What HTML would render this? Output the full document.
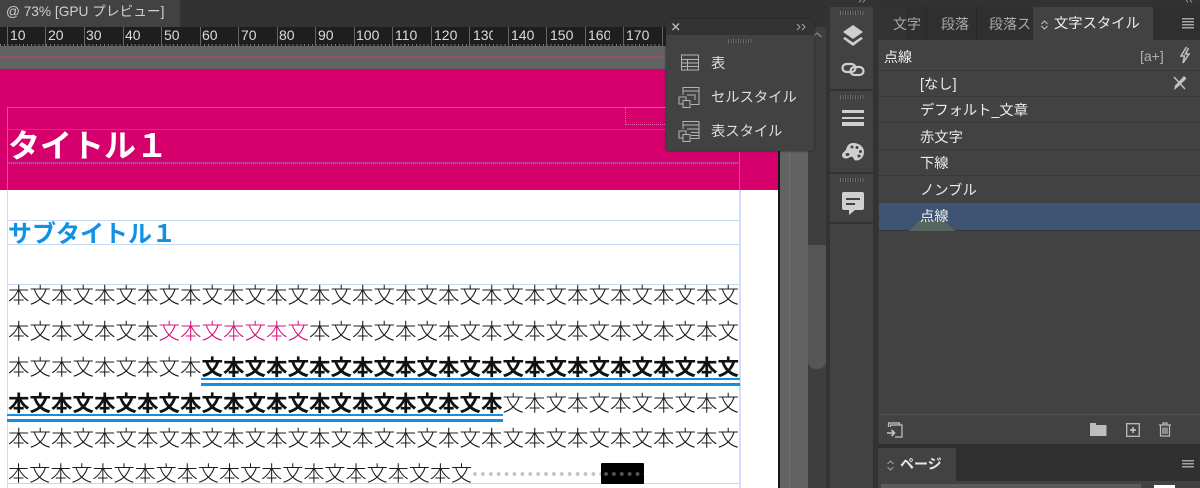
<!DOCTYPE html>
<html lang="ja"><head><meta charset="utf-8">
<style>
html,body{margin:0;padding:0}
body{width:1200px;height:488px;overflow:hidden;position:relative;background:#3a3a3a;font-family:"Liberation Sans","Noto Sans CJK JP",sans-serif}
div,svg,span.a{position:absolute}
.t{white-space:nowrap;line-height:1}
.b{font-size:21.5px;color:#1c1c1c;left:8px;font-family:"Noto Sans CJK JP",sans-serif;font-weight:300}
.b b{font-weight:700;color:#111}
.b i{font-style:normal;color:#d8127f}
.g{background:#c4d9f8;height:1px;left:7px;width:733px}
.gp{background:#b8399e;height:1px;left:7px;width:733px}
.rul{color:#dcdcdc;font-size:14px;top:28px}
.tick{background:#666;width:1px;top:27px;height:19px}
.rt{left:920px;color:#ececec;font-size:14.3px}
.tab{color:#a9a9a9;font-size:14px;top:17px}
.grip{background:repeating-linear-gradient(90deg,#777 0 1px,#333 1px 2.5px);height:4px}
</style></head><body>
<!-- top bar -->
<div style="left:0;top:0;width:1200px;height:27px;background:#323232"></div>
<div style="left:0;top:0;width:180px;height:27px;background:#424242"></div>
<div class="t" style="left:6px;top:5px;font-size:13.7px;color:#cfcfcf">@ 73% [GPU プレビュー]</div>
<!-- ruler -->
<div style="left:0;top:27px;width:666px;height:19px;background:#1e1e1e"></div>
<div style="left:0;top:44px;width:666px;height:2px;background:repeating-linear-gradient(90deg,#777 0 1px,transparent 1px 3.85px)"></div>
<div class="tick" style="left:7px"></div><div class="tick" style="left:45px"></div><div class="tick" style="left:84px"></div><div class="tick" style="left:123px"></div><div class="tick" style="left:161px"></div><div class="tick" style="left:200px"></div><div class="tick" style="left:238px"></div><div class="tick" style="left:277px"></div><div class="tick" style="left:315px"></div><div class="tick" style="left:354px"></div><div class="tick" style="left:392px"></div><div class="tick" style="left:431px"></div><div class="tick" style="left:469px"></div><div class="tick" style="left:508px"></div><div class="tick" style="left:546px"></div><div class="tick" style="left:585px"></div><div class="tick" style="left:623px"></div><div class="tick" style="left:662px"></div>
<div class="t rul" style="left:10px">10</div><div class="t rul" style="left:48px">20</div><div class="t rul" style="left:86px">30</div><div class="t rul" style="left:125px">40</div><div class="t rul" style="left:164px">50</div><div class="t rul" style="left:202px">60</div><div class="t rul" style="left:241px">70</div><div class="t rul" style="left:279px">80</div><div class="t rul" style="left:318px">90</div><div class="t rul" style="left:356px">100</div><div class="t rul" style="left:395px">110</div><div class="t rul" style="left:434px">120</div><div class="t rul" style="left:473px;width:20px;overflow:hidden">130</div><div class="t rul" style="left:511px">140</div><div class="t rul" style="left:550px">150</div><div class="t rul" style="left:588px;width:22px;overflow:hidden">160</div><div class="t rul" style="left:626px">170</div>
<!-- pasteboard -->
<div style="left:0;top:46px;width:808px;height:442px;background:#636363"></div>
<div style="left:0;top:56px;width:666px;height:2px;background:#98545c"></div>
<div style="left:789px;top:151px;width:1px;height:337px;background:#a65560"></div>
<!-- page -->
<div style="left:0;top:190px;width:778px;height:298px;background:#fff"></div>
<div style="left:0;top:69px;width:778px;height:121px;background:#d6006c"></div>
<div style="left:778px;top:69px;width:2px;height:419px;background:#161616"></div>
<!-- scroll column -->
<div style="left:808px;top:27px;width:18px;height:461px;background:#3e3e3e"></div>
<div style="left:808px;top:245px;width:18px;height:124px;background:#565656;border-radius:0 0 8px 8px"></div>
<svg style="left:811px;top:31px" width="12" height="8"><path d="M1.5 6L6 2l4.500 4" fill="none" stroke="#8a8a8a" stroke-width="1.200"/></svg>
<!-- guides pink -->
<div style="left:7px;top:107px;width:733px;height:1px;background:#dc4a98"></div>
<div class="gp" style="top:128.500px"></div>
<div class="gp" style="top:161.500px"></div>
<div style="left:7px;top:163px;width:733px;height:0;border-top:1px dotted #e45ca6"></div>
<div style="left:625px;top:107px;width:41px;height:16px;border:1px dotted #e56aa9;border-right:0"></div>
<div style="left:7px;top:107px;width:1px;height:83px;background:#c25bad"></div>
<div style="left:739px;top:152px;width:1px;height:38px;background:#b654b0"></div>
<!-- guides white -->
<div style="left:6.500px;top:190px;width:1.500px;height:298px;background:#d3dcfb"></div>
<div style="left:739px;top:190px;width:1.500px;height:298px;background:#d3dcfb"></div>
<div class="g" style="top:220px"></div>
<div class="g" style="top:244px"></div>
<div class="g" style="top:283.500px;height:1.500px"></div>
<div class="g" style="top:483px"></div>
<!-- titles -->
<div class="t" style="left:8px;top:128px;font-size:32px;font-weight:700;color:#fff;font-family:'Noto Sans CJK JP',sans-serif">タイトル１</div>
<div class="t" style="left:8px;top:220px;font-size:24px;font-weight:700;color:#1190e4;font-family:'Noto Sans CJK JP',sans-serif">サブタイトル１</div>
<!-- body -->
<div class="t b" style="top:284px">本文本文本文本文本文本文本文本文本文本文本文本文本文本文本文本文本文</div>
<div class="t b" style="top:320px">本文本文本文本<i>文本文本文本文</i>本文本文本文本文本文本文本文本文本文本文</div>
<div class="t b" style="top:356px">本文本文本文本文本<b>文本文本文本文本文本文本文本文本文本文本文本文本文</b></div>
<div class="t b" style="top:391.500px"><b>本文本文本文本文本文本文本文本文本文本文本文本</b>文本文本文本文本文本文</div>
<div class="t b" style="top:427px">本文本文本文本文本文本文本文本文本文本文本文本文本文本文本文本文本文</div>
<div class="t b" style="top:463px;font-size:21.100px">本文本文本文本文本文本文本文本文本文本文本文</div>
<!-- underlines -->
<div style="left:201px;top:378px;width:539px;height:2px;background:#1190e4"></div>
<div style="left:201px;top:382.500px;width:539px;height:3px;background:#1190e4"></div>
<div style="left:7px;top:414px;width:496px;height:2px;background:#1190e4"></div>
<div style="left:7px;top:418.500px;width:496px;height:3px;background:#1190e4"></div>
<!-- dotted -->
<div style="left:473px;top:472px;width:128px;height:4px;background:radial-gradient(circle 2px at 2px 2px,#c4c4c4 90%,transparent 100%) 0 0/7.900px 4px repeat-x"></div>
<div style="left:601px;top:463px;width:43px;height:21px;background:#000;border-radius:1px"></div>
<div style="left:604px;top:472px;width:40px;height:4px;background:radial-gradient(circle 2px at 2px 2px,#555 90%,transparent 100%) 0 0/7.900px 4px repeat-x"></div>
<!-- floating panel -->
<div style="left:666px;top:19px;width:148px;height:132px;background:#424242;border-radius:3px;box-shadow:0 0 2px #222"></div>
<div style="left:666px;top:19px;width:148px;height:16px;background:#333;border-radius:3px 3px 0 0"></div>
<svg style="left:671px;top:22px" width="10" height="10"><path d="M1.500 1.500l6.500 6.500M8 1.500L1.500 8" stroke="#bdbdbd" stroke-width="1.300"/></svg>
<svg style="left:796px;top:23px" width="11" height="9"><path d="M1 1l3 3-3 3M6 1l3 3-3 3" stroke="#a5a5a5" fill="none"/></svg>
<div class="grip" style="left:728px;top:39px;width:24px"></div>
<svg style="left:680px;top:54px" width="20" height="18" fill="none" stroke="#b5b5b5"><rect x="1.500" y="1" width="17" height="15"/><path d="M1.500 5.500h17M1.500 9h17M1.500 12.500h17M7.500 5.500V16"/></svg>
<svg style="left:678px;top:86px" width="22" height="23" fill="none" stroke="#b5b5b5"><path d="M5 9V1.500h16v17h-8M5 5h16M9 9h8v5"/><rect x="1" y="11" width="7" height="7"/><rect x="5" y="14.500" width="7" height="7" fill="#424242"/></svg>
<svg style="left:678px;top:120px" width="22" height="23" fill="none" stroke="#b5b5b5"><path d="M5 9V1.500h16v17h-8M5 5h16M9 9h12M13 12.500h8M13 15.500h8"/><rect x="1" y="11" width="7" height="7"/><rect x="5" y="14.500" width="7" height="7" fill="#424242"/></svg>
<div class="t" style="left:711px;top:57px;font-size:14.3px;color:#dedede">表</div>
<div class="t" style="left:711px;top:91px;font-size:14.3px;color:#dedede">セルスタイル</div>
<div class="t" style="left:711px;top:125px;font-size:14.3px;color:#dedede">表スタイル</div>
<!-- dock -->
<div style="left:826px;top:0;width:52px;height:488px;background:#333"></div>
<svg style="left:858px;top:0" width="10" height="4"><path d="M3 0L1 2.500M7 0L5 2.500" stroke="#999" fill="none"/></svg>
<svg style="left:1185px;top:0" width="10" height="4"><path d="M1 0l2 2.500M5 0l2 2.500" stroke="#999" fill="none"/></svg>
<div style="left:830px;top:7px;width:43px;height:82px;background:#424242"></div>
<div style="left:830px;top:91px;width:43px;height:81px;background:#424242"></div>
<div style="left:830px;top:174px;width:43px;height:48px;background:#424242"></div>
<div style="left:830px;top:224px;width:43px;height:264px;background:#424242"></div>
<div class="grip" style="left:840px;top:11px;width:24px"></div>
<div class="grip" style="left:840px;top:95px;width:24px"></div>
<div class="grip" style="left:840px;top:178px;width:24px"></div>
<svg style="left:842px;top:24px" width="22" height="24" fill="#cfcfcf"><path d="M11 1L21 8 11 15 1 8z"/><path d="M3 13l8 5.500L19 13l2 1.500L11 22 1 14.500z"/></svg>
<svg style="left:841px;top:61px" width="24" height="17" fill="none" stroke="#cfcfcf" stroke-width="2.200"><rect x="1.500" y="3" width="13" height="8" rx="4"/><rect x="9.500" y="6" width="13" height="8" rx="4"/></svg>
<div style="left:842px;top:110px;width:22px;height:3px;background:#d0d0d0"></div>
<div style="left:842px;top:117px;width:22px;height:2px;background:#d0d0d0"></div>
<div style="left:842px;top:122px;width:22px;height:4px;background:#d0d0d0"></div>
<svg style="left:841px;top:142px" width="24" height="20"><path d="M12 1c6 0 11 3.500 11 9s-4 8.500-8 8.500c-2.500 0-2-2.500-3.500-3.500-2-1-3.500 1.500-6.500 1.500C2 16.500 1 14.500 1 13c0-2.500 3-3 4-5.500C6 4 8 1 12 1z" fill="#cfcfcf"/><circle cx="11" cy="5" r="1.500" fill="#424242"/><circle cx="16" cy="5.500" r="1.500" fill="#424242"/><circle cx="19.500" cy="9.500" r="1.500" fill="#424242"/><circle cx="18" cy="14" r="1.500" fill="#424242"/><ellipse cx="6.500" cy="12.500" rx="2" ry="1.500" fill="#424242"/></svg>
<svg style="left:841px;top:191px" width="24" height="25"><path d="M3 1h18a2 2 0 0 1 2 2v14a2 2 0 0 1-2 2h-7l-6 5v-5H3a2 2 0 0 1-2-2V3a2 2 0 0 1 2-2z" fill="#d0d0d0"/><path d="M5 7h14v2H5zM5 12h9v2H5z" fill="#424242"/></svg>
<!-- right panel tabs -->
<div style="left:878px;top:7px;width:322px;height:33px;background:#2f2f2f"></div>
<div style="left:878px;top:7px;width:28px;height:33px;background:#333"></div>
<div style="left:926px;top:7px;width:1px;height:33px;background:#272727"></div>
<div style="left:976px;top:7px;width:1px;height:33px;background:#272727"></div>
<div class="t tab" style="left:893px">文字</div>
<div class="t tab" style="left:941px">段落</div>
<div class="t tab" style="left:989px;width:43px;overflow:hidden">段落スタイル</div>
<div style="left:1033px;top:7px;width:120px;height:33px;background:#424242"></div>
<svg style="left:1040px;top:20px" width="9" height="10" fill="none" stroke="#c0c0c0"><path d="M1.500 4l3-3 3 3M1.500 6l3 3 3-3"/></svg>
<div class="t" style="left:1054px;top:17px;font-size:14.3px;color:#eee">文字スタイル</div>
<div style="left:1182px;top:18px;width:12px;height:11px;background:repeating-linear-gradient(180deg,#a5a5a5 0 1.500px,transparent 1.500px 3px)"></div>
<!-- panel -->
<div style="left:878px;top:40px;width:322px;height:448px;background:#424242"></div>
<div style="left:878px;top:40px;width:1px;height:405px;background:#3a3a3a"></div>
<div class="t" style="left:884px;top:50px;font-size:14px;color:#eee">点線</div>
<div class="t" style="left:1140px;top:49px;font-size:14px;color:#b0b0b0">[a+]</div>
<svg style="left:1179px;top:46px" width="12" height="18"><path d="M7.500 1L2 10h3.500L4 17l6-9H6.500L9.500 2" fill="none" stroke="#c0c0c0" stroke-width="1.500"/></svg>
<div style="left:879px;top:70px;width:321px;height:1px;background:#363636"></div>
<div style="left:879px;top:96px;width:321px;height:1px;background:#383838"></div>
<div style="left:879px;top:122px;width:321px;height:1px;background:#383838"></div>
<div style="left:879px;top:149px;width:321px;height:1px;background:#383838"></div>
<div style="left:879px;top:175px;width:321px;height:1px;background:#383838"></div>
<div style="left:879px;top:203px;width:321px;height:27px;background:#3f5473"></div>
<div style="left:879px;top:230px;width:321px;height:1px;background:#383838"></div>
<svg style="left:908px;top:220px" width="48" height="12"><path d="M12 0h24l11 11H1z" fill="#56655f"/></svg>
<div class="t rt" style="top:78px">[なし]</div>
<div class="t rt" style="top:104px">デフォルト_文章</div>
<div class="t rt" style="top:131px">赤文字</div>
<div class="t rt" style="top:157px">下線</div>
<div class="t rt" style="top:184px">ノンブル</div>
<div class="t rt" style="top:210px">点線</div>
<svg style="left:1172px;top:75px" width="15" height="16"><path d="M2 2l11 12" stroke="#c0c0c0" stroke-width="1.500"/><path d="M12 1l2.500 2.500-8 8L2 15l1-4.500z" fill="#c0c0c0"/></svg>
<!-- footer -->
<div style="left:879px;top:414px;width:321px;height:1px;background:#505050"></div>
<svg style="left:886px;top:421px" width="18" height="18" fill="none" stroke="#c4c4c4" stroke-width="1.200"><path d="M2.500 6V2h11v2M4.500 6V4h11.500v12H9"/><path d="M1 12h7M5.500 9l3 3-3 3" stroke-width="1.600"/></svg>
<svg style="left:1090px;top:422px" width="17" height="14"><path d="M0 1h6v2H0z" fill="#bdbdbd"/><path d="M0 3h16.500v12H0z" fill="#bdbdbd"/></svg>
<svg style="left:1126px;top:423px" width="14" height="14" fill="none"><rect x=".7" y=".7" width="12.600" height="12.600" stroke="#bdbdbd" stroke-width="1.300"/><path d="M4 7h6M7 4v6" stroke="#d0d0d0" stroke-width="1.400"/></svg>
<svg style="left:1158px;top:422px" width="14" height="15" fill="none" stroke="#bdbdbd" stroke-width="1.200"><path d="M1 3h12M5 3V1h4v2M2.500 3v11h9V3M5 5.500v6.500M7 5.500v6.500M9 5.500v6.500"/></svg>
<!-- pages panel -->
<div style="left:878px;top:444px;width:322px;height:3px;background:#2e2e2e"></div>
<div style="left:878px;top:447px;width:322px;height:34px;background:#303030"></div>
<div style="left:878px;top:448px;width:78px;height:33px;background:#424242"></div>
<svg style="left:886px;top:460px" width="9" height="11" fill="none" stroke="#a0a0a0"><path d="M1.500 4l3-3 3 3M1.500 7l3 3 3-3"/></svg>
<div class="t" style="left:900px;top:457px;font-size:14px;font-weight:700;color:#e8e8e8">ページ</div>
<div style="left:1182px;top:460px;width:12px;height:9px;background:repeating-linear-gradient(180deg,#a5a5a5 0 1.500px,transparent 1.500px 3px)"></div>
<div style="left:881px;top:484px;width:260px;height:4px;background:#5a5a5a"></div>
<div style="left:1154px;top:485px;width:21px;height:3px;background:#fff"></div>
</body></html>
